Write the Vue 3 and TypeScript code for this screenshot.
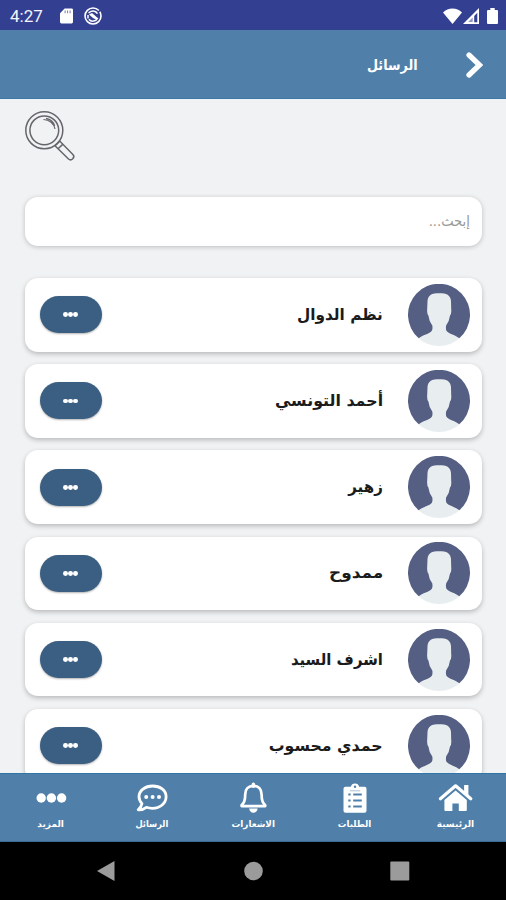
<script setup lang="ts">
interface Contact {
  name: string
  stretch: number
}

interface Tab {
  label: string
  icon: 'home' | 'orders' | 'bell' | 'chat' | 'more'
  stretch: number
}

const contacts: Contact[] = [
  { name: 'نظم الدوال', stretch: 0.955 },
  { name: 'أحمد التونسي', stretch: 0.99 },
  { name: 'زهير', stretch: 0.94 },
  { name: 'ممدوح', stretch: 1.06 },
  { name: 'اشرف السيد', stretch: 0.93 },
  { name: 'حمدي محسوب', stretch: 0.985 },
]

const tabs: Tab[] = [
  { label: 'الرئيسية', icon: 'home', stretch: 1 },
  { label: 'الطلبات', icon: 'orders', stretch: 0.96 },
  { label: 'الاشعارات', icon: 'bell', stretch: 0.98 },
  { label: 'الرسائل', icon: 'chat', stretch: 0.92 },
  { label: 'المزيد', icon: 'more', stretch: 1 },
]
</script>

<template>
  <div class="screen" dir="rtl">
    <div class="status" dir="ltr">
      <span class="clock">4:27</span>
      <svg class="sd" viewBox="0 0 14 16"><path d="M5 0h7.5Q14 0 14 1.5v13q0 1.5-1.500 1.500h-11Q0 16 0 14.500V5z" fill="#fff" /><path d="M5.500 2v3M8.200 2v3M10.900 2v3" stroke="#333f90" stroke-width="1.100" opacity=".65" /></svg>
      <svg class="sync" viewBox="0 0 18 18"><circle cx="9" cy="9" r="8" fill="none" stroke="#fff" stroke-width="1.600" stroke-dasharray="44 1.500" /><path d="M4.600 6.200a5.200 5.200 0 0 1 8.900.4M13.700 11a5.200 5.200 0 0 1-8.800 1.200M4 8v3.600" fill="none" stroke="#fff" stroke-width="1.500" /><path d="M5 7.500 8 6l6 5.300-1.500 1.500L9 11z" fill="#fff" /></svg>
      <span class="grow"></span>
      <svg class="wifi" viewBox="0 0 19 16"><path d="M0 4.500Q4 .4 9.500.4T19 4.500L9.500 16z" fill="#fff" /></svg>
      <svg class="signal" viewBox="0 0 16 16"><path d="M16 0v16H0z" fill="#fff" /><path d="M14.300 4.800v9.400h-3.100V8z" fill="#333f90" /><path d="M9.700 9.600v4.500H5.200z" fill="#333f90" opacity=".55" /></svg>
      <svg class="battery" viewBox="0 0 11 16"><path d="M3.300 0h4.400v2H10q1 0 1 1v12q0 1-1 1H1q-1 0-1-1V3q0-1 1-1h2.300z" fill="#fff" /></svg>
    </div>

    <header class="header">
      <svg class="chevron" viewBox="0 0 17 26"><path d="M3 3l10.500 10L3 23" fill="none" stroke="#fff" stroke-width="5.200" stroke-linecap="round" /></svg>
      <h1 class="title">الرسائل</h1>
    </header>

    <main class="content">
      <svg class="magnifier" viewBox="0 0 52 52" fill="none" stroke="#66666a" stroke-width="1.500">
        <circle cx="19.300" cy="20.300" r="18.500" />
        <circle cx="19.300" cy="20.300" r="14.400" />
        <path d="M18.500 9.500c6 .2 10.500 4 11.500 9.500M21 8.400c4.500 1 7.700 4 8.700 7.500" stroke-width="1.200" />
        <path d="M30 35.800l4.700-4.700 13.200 13.500c2.600 2.700-1.500 6.900-4.400 4.400zM33 38.800l5-4.700" />
      </svg>

      <div class="search"><span class="placeholder">إبحث...</span></div>

      <section class="list">
        <article v-for="c in contacts" :key="c.name" class="card">
          <svg class="avatar" viewBox="0 0 62 62">
            <circle cx="31" cy="31" r="31" fill="#e8eef0" />
            <path d="M10.800 54.300A31 31 0 1 1 51.200 54.300C48 51 40.500 50 38.300 46.500Q37.600 44.500 38.100 41.500Q41.300 37.500 42 31.500Q43.700 29.500 43.200 25L43 17C42.500 11 38.500 9.300 31.200 9.300S20 11 19.500 17L19.200 25Q18.800 29.500 20.400 31.500Q21.100 37.500 24.300 41.500Q24.800 44.500 24 46.500C21.800 50 14 51 10.800 54.300z" fill="#555f83" />
          </svg>
          <span class="name" :style="{ transform: `scaleX(${c.stretch})` }">{{ c.name }}</span>
          <button class="pill" type="button"><i></i><i></i><i></i></button>
        </article>
      </section>
    </main>

    <nav class="tabs">
      <div v-for="t in tabs" :key="t.icon" class="tab">
        <svg v-if="t.icon === 'home'" class="icon" viewBox="-.6 0 34 30"><path d="M1.800 15.700 17 2.800 32.200 15.700" fill="none" stroke="#fff" stroke-width="3.200" stroke-linecap="round" stroke-linejoin="round" /><path d="M25.500 2h4.300v11l-4.300-3.500zM5.800 16.900 17 7.400l11.200 9.500V27q0 1-1 1h-7v-7.500h-6.400V28h-7q-1 0-1-1z" fill="#fff" /></svg>
        <svg v-else-if="t.icon === 'orders'" class="icon" viewBox="-1 0 34 30"><path fill-rule="evenodd" d="M7.500 3.800h5.300a4.300 4.300 0 0 1 8.400 0h5.300q2 0 2 2v22q0 2-2 2h-19q-2 0-2-2v-22q0-2 2-2zM17 2.600a1.200 1.200 0 1 0 0 2.400 1.200 1.200 0 0 0 0-2.400z" fill="#fff" /><path d="M10.300 11.500h2.300M10.300 17.500h2.300M10.300 23.500h2.300M15.200 11.500h8.600M15.200 17.500h8.600M15.200 23.500h8.600" stroke="#5080aa" stroke-width="2" /><path d="M11.800 7.800h10.400" stroke="#5080aa" stroke-width=".5" /></svg>
        <svg v-else-if="t.icon === 'bell'" class="icon" viewBox="-.4 0 34 30"><path d="M17 2.900c-5.200 0-8.200 3.500-8.200 8.500 0 7-1.400 8.500-3.600 10.700v1h23.600v-1c-2.200-2.200-3.600-3.700-3.600-10.700 0-5-3-8.500-8.200-8.500z" fill="none" stroke="#fff" stroke-width="2.700" stroke-linejoin="round" /><path d="M17 1.200v2" stroke="#fff" stroke-width="3.400" stroke-linecap="round" /><path d="M12.800 25.500h8.400a4.200 4.200 0 0 1-8.400 0z" fill="#fff" /></svg>
        <svg v-else-if="t.icon === 'chat'" class="icon" viewBox="-.4 -.4 34 30"><path d="M17.200 2.600C9.400 2.600 3.600 7.300 3.600 13.200c0 2.700 1.100 5 3 7-.5 2.500-1.800 4.500-3.800 6.300 3.300.1 6-.9 8.200-2.600 2 .7 3.900 1 6 1 7.700 0 13.700-5 13.700-11.500S24.700 2.600 17.200 2.600z" fill="none" stroke="#fff" stroke-width="2.800" stroke-linejoin="round" /><g fill="#fff"><circle cx="10.800" cy="13.600" r="2" /><circle cx="17.200" cy="13.600" r="2" /><circle cx="23.600" cy="13.600" r="2" /></g></svg>
        <svg v-else class="icon" viewBox="-.4 0 34 30"><g fill="#fff"><circle cx="6.800" cy="15" r="4.700" /><circle cx="17" cy="15" r="4.700" /><circle cx="27.200" cy="15" r="4.700" /></g></svg>
        <span class="label" :style="{ transform: `scaleX(${t.stretch})` }">{{ t.label }}</span>
      </div>
    </nav>

    <footer class="system" dir="ltr">
      <svg viewBox="0 0 20 22"><path d="M18.500 1v20L1 11z" fill="#9b9b9b" /></svg>
      <svg viewBox="0 0 20 22"><circle cx="10.500" cy="11" r="9.300" fill="#9b9b9b" /></svg>
      <svg viewBox="0 0 20 22"><rect x=".3" y="1.500" width="19" height="19" rx="1" fill="#9b9b9b" /></svg>
    </footer>
  </div>
</template>

<style>
body {
  margin: 0;
  background: #000;
}
</style>

<style scoped>
.screen {
  width: 506px;
  height: 900px;
  display: flex;
  flex-direction: column;
  overflow: hidden;
  background: #f0f2f4;
  font-family: 'DejaVu Sans', sans-serif;
}
.status {
  flex: none;
  height: 30px;
  box-sizing: border-box;
  padding: 1px 8px 0 10px;
  display: flex;
  align-items: center;
  background: #333f90;
}
.clock {
  width: 50px;
  font: 400 17px/28px Roboto, sans-serif;
  color: #f4f5fd;
}
.sd { width: 13px; height: 16px; }
.sync { width: 18px; height: 18px; margin-left: 11px; }
.grow { flex: 1; }
.wifi { width: 19px; height: 16px; }
.signal { width: 16px; height: 16px; margin-left: 1px; }
.battery { width: 11px; height: 16px; margin-left: 8px; }
.header {
  flex: none;
  height: 69px;
  box-sizing: border-box;
  padding: 1px 23px 0 0;
  display: flex;
  align-items: center;
  background: #5080aa;
  border-bottom: 1px solid #3f76a5;
}
.chevron { width: 17px; height: 26px; }
.title {
  margin: 1px 48px 0 0;
  font-size: 14px;
  line-height: 30px;
  font-weight: 700;
  color: #fff;
  transform: scaleX(.91);
  transform-origin: right;
}
.content {
  flex: 1;
  min-height: 0;
  overflow: hidden;
  padding: 11px 24.500px 0;
}
.magnifier {
  display: block;
  width: 52px;
  height: 52px;
  margin-right: auto;
}
.search {
  height: 49px;
  margin-top: 35px;
  box-sizing: border-box;
  padding: 0 12px;
  border-radius: 13px;
  background: #fff;
  box-shadow: 0 1px 5px rgba(0, 0, 0, .22);
  font-size: 14px;
  line-height: 48px;
  color: #999;
}
.placeholder {
  display: inline-block;
  transform: scaleX(.94);
  transform-origin: right;
}
.list {
  display: flex;
  flex-direction: column;
  gap: 12.700px;
  margin-top: 32px;
}
.card {
  height: 73.500px;
  flex: none;
  box-sizing: border-box;
  padding: 0 12px 0 15px;
  display: flex;
  align-items: center;
  border-radius: 13px;
  background: #fff;
  box-shadow: 0 2px 5px rgba(0, 0, 0, .24);
}
.avatar { width: 62px; height: 62px; flex: none; }
.name {
  margin-right: 24.500px;
  font-size: 16px;
  font-weight: 700;
  line-height: 30px;
  color: #1b1b1b;
  white-space: nowrap;
  transform-origin: right;
}
.pill {
  width: 62px;
  height: 37px;
  margin: 0 auto 0 0;
  padding: 0;
  border: 0;
  border-radius: 19px;
  background: #3b5f82;
  box-shadow: 0 1px 2px rgba(0, 0, 0, .3);
  display: flex;
  align-items: center;
  justify-content: center;
  gap: .4px;
}
.pill i {
  width: 4.800px;
  height: 4.800px;
  border-radius: 50%;
  background: #fff;
}
.tabs {
  flex: none;
  height: 69px;
  box-sizing: border-box;
  border-top: 1px solid #3174a5;
  border-bottom: 1px solid #3d6c94;
  display: grid;
  grid-template-columns: repeat(5, 1fr);
  background: #5080aa;
}
.tab {
  display: flex;
  flex-direction: column;
  align-items: center;
  padding-top: 9px;
}
.icon { width: 34px; height: 30px; overflow: visible; }
.label {
  margin-top: 3px;
  font-size: 9px;
  font-weight: 700;
  line-height: 16px;
  color: #fff;
  white-space: nowrap;
}
.system {
  flex: none;
  height: 58px;
  box-sizing: border-box;
  padding: 0 96px;
  display: flex;
  align-items: center;
  justify-content: space-between;
  background: #000;
}
.system svg { width: 20px; height: 22px; }
</style>
